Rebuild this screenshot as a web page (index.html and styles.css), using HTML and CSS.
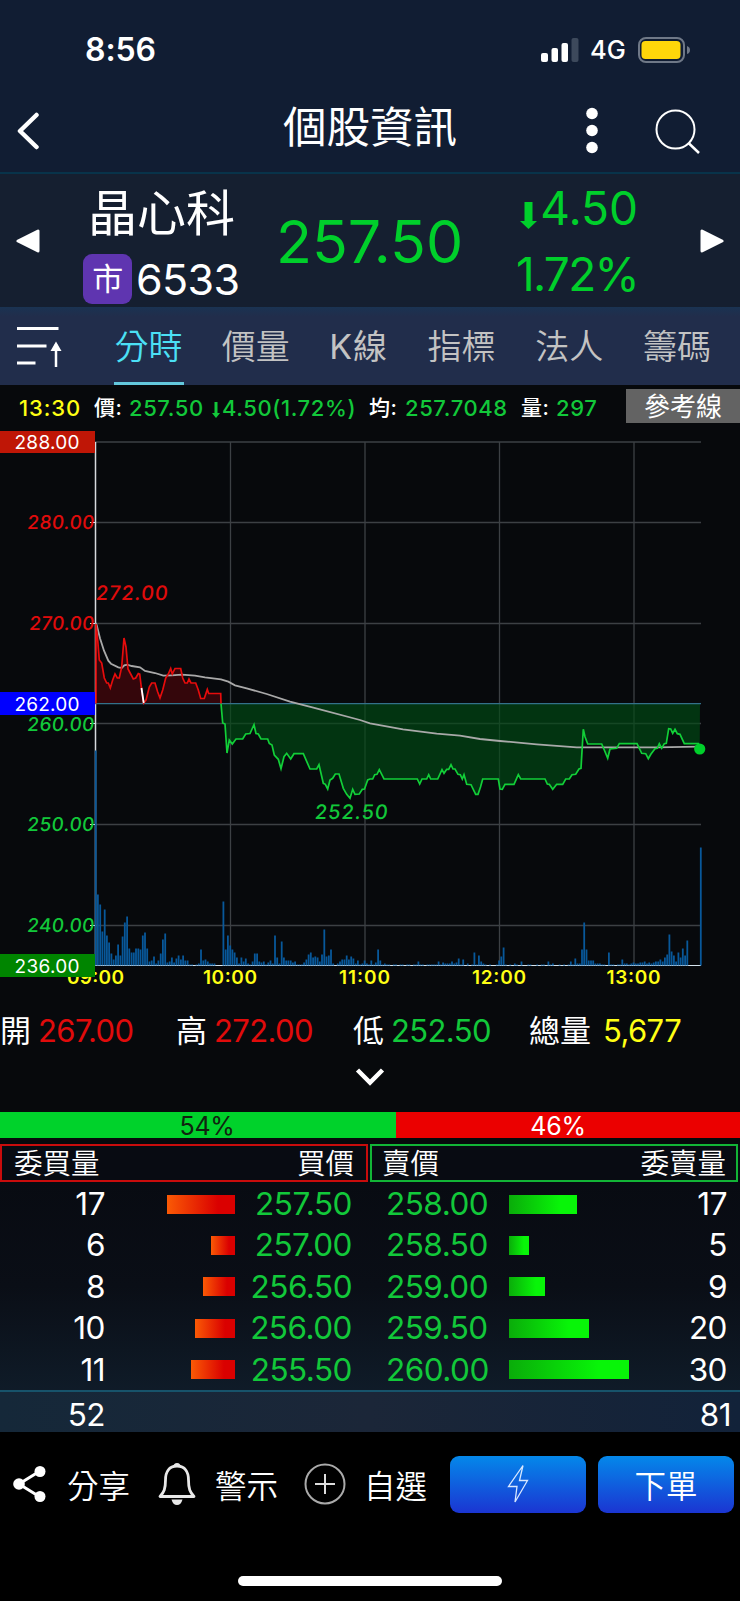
FILE: index.html
```html
<!DOCTYPE html>
<html lang="zh-Hant">
<head>
    <meta charset="UTF-8">
    <meta name="viewport" content="width=device-width, initial-scale=1.0">
    <title>個股資訊</title>
    <link rel="stylesheet" href="styles.css">
</head>
<body>

    <div class="status-bar">
        <span class="clock">8:56</span>
        <svg class="signal" width="38" height="24" viewBox="0 0 38 24">
            <rect x="0" y="15" width="7" height="9" rx="2" fill="#fff"/>
            <rect x="10.500" y="10" width="6.500" height="14" rx="2" fill="#fff"/>
            <rect x="20.500" y="5" width="6.500" height="19" rx="2" fill="#fff"/>
            <rect x="30.500" y="0" width="7" height="24" rx="2" fill="#3d495c"/>
        </svg>
        <span class="network">4G</span>
        <svg class="battery" width="53" height="26" viewBox="0 0 53 26">
            <rect x="1" y="1" width="45" height="24" rx="7" fill="none" stroke="#6f7887" stroke-width="2"/>
            <rect x="3.500" y="4" width="39" height="18" rx="4" fill="#ffd60a"/>
            <path d="M49 9 Q52 10 52 13 Q52 16 49 17 Z" fill="#6f7887"/>
        </svg>
    </div>

    <div class="nav-bar">
        <svg class="back" width="24" height="38" viewBox="0 0 24 38">
            <path d="M20.500 3 L4 19 L20.500 35" fill="none" stroke="#fff" stroke-width="4.500" stroke-linecap="round" stroke-linejoin="round"/>
        </svg>
        <h1>個股資訊</h1>
        <svg class="more" width="12" height="48" viewBox="0 0 12 48">
            <circle cx="6" cy="6.500" r="5.800" fill="#fff"/>
            <circle cx="6" cy="23.500" r="5.800" fill="#fff"/>
            <circle cx="6" cy="40.500" r="5.800" fill="#fff"/>
        </svg>
        <svg class="search" width="46" height="46" viewBox="0 0 46 46">
            <circle cx="20.500" cy="20.500" r="19" fill="none" stroke="#fff" stroke-width="2"/>
            <path d="M33.500 34 L44 44" stroke="#fff" stroke-width="2.500"/>
        </svg>
    </div>

    <div class="stock">
        <svg class="prev" width="24" height="24" viewBox="0 0 24 24"><path d="M2 12 L22 2 V22 Z" fill="#fff" stroke="#fff" stroke-width="3" stroke-linejoin="round"/></svg>
        <div class="stock-name">
            <div class="name">晶心科</div>
            <div class="code"><span class="badge">市</span><span>6533</span></div>
        </div>
        <div class="stock-price">257.50</div>
        <div class="stock-change">
            <div><svg class="down" width="17" height="27" viewBox="0 0 17 27"><path d="M4.500 0 H12.500 V19 H17 L8.500 27 L0 19 H4.500 Z" fill="#00cf2b"/></svg>4.50</div>
            <div class="percent">1.72%</div>
        </div>
        <svg class="next" width="24" height="24" viewBox="0 0 24 24"><path d="M22 12 L2 2 V22 Z" fill="#fff" stroke="#fff" stroke-width="3" stroke-linejoin="round"/></svg>
    </div>

    <div class="tabs">
        <svg class="menu" width="48" height="44" viewBox="0 0 48 44">
            <path d="M0 4.500 H41.500 M0 22 H29.500 M0 39 H18.500" stroke="#fff" stroke-width="3"/>
            <path d="M39 43 V20" stroke="#fff" stroke-width="2.500"/>
            <path d="M39 17.500 L44.500 27 H33.500 Z" fill="#fff"/>
        </svg>
        <div class="tab active">分時</div>
        <div class="tab">價量</div>
        <div class="tab tab-k">K線</div>
        <div class="tab">指標</div>
        <div class="tab">法人</div>
        <div class="tab">籌碼</div>
    </div>

    <div class="quote-line">
        <span class="yellow q-time">13:30</span>
        <span class="q-label q-price">價:</span>
        <span class="green q-last">257.50</span>
        <span class="green q-diff"><svg width="8" height="16" viewBox="0 0 8 16"><path d="M2.500 0 H5.500 V11 H8 L4 16 L0 11 H2.500 Z" fill="#12c83a"/></svg>4.50(1.72%)</span>
        <span class="q-label q-avg">均:</span>
        <span class="green q-mean">257.7048</span>
        <span class="q-label q-vol">量:</span>
        <span class="green q-lots">297</span>
        <div class="ref-btn">參考線</div>
    </div>

    <svg class="chart" width="740" height="570" viewBox="0 430 740 570">
        <g class="grid">
            <path d="M95 442H701 M95 522.500H701 M95 623.500H701 M95 723.500H701 M95 824.500H701 M95 925.500H701"/>
            <path d="M230.500 442V965 M365 442V965 M499.500 442V965 M634 442V965"/>
        </g>
        <path d="M95.500 442V966" stroke="#d6dade" stroke-width="1.500"/>
        <path d="M90 522.500H95 M90 623.500H95 M90 723.500H95 M90 824.500H95 M90 925.500H95" stroke="#e8e8e8" stroke-width="1.200"/>
        <path id="upArea" class="up-area"/>
        <path id="downArea" class="down-area"/>
        <path d="M95 703.600H701" stroke="#33718a" stroke-width="1.200"/>
        <path d="M95 965.500H701" stroke="#d6e4ee" stroke-width="1.200"/>
        <g id="volume" fill="#08589a"></g>
        <path id="avgLine" class="avg-line"/>
        <path id="upLine" class="up-line"/>
        <path id="downLine" class="down-line"/>
        <path d="M141.500 688 L143.700 703" stroke="#fff" stroke-width="1.800"/>
        <circle cx="699.700" cy="749" r="5.600" fill="#00cf2b"/>

        <g class="y-label">
            <text x="27.500" y="529" textLength="67" class="t-red">280.00</text>
            <text x="29.500" y="630" textLength="65" class="t-red">270.00</text>
            <text x="27.500" y="731" textLength="67" class="t-green">260.00</text>
            <text x="27.500" y="831.500" textLength="67" class="t-green">250.00</text>
            <text x="27.500" y="932" textLength="67" class="t-green">240.00</text>
            <text x="96" y="600.500" textLength="72" class="t-red peak">272.00</text>
            <text x="315" y="819" textLength="73" class="t-green peak">252.50</text>
        </g>
        <g class="x-label">
            <text x="95.500" y="984" textLength="57">09:00</text>
            <text x="230" y="984" textLength="54">10:00</text>
            <text x="364.500" y="984" textLength="51">11:00</text>
            <text x="499" y="984" textLength="54">12:00</text>
            <text x="633.500" y="984" textLength="54">13:00</text>
        </g>
        <rect x="0" y="431" width="95" height="22" fill="#bf1606"/>
        <rect x="0" y="692" width="95" height="23" fill="#0000ff"/>
        <rect x="0" y="954" width="95" height="23" fill="#008500"/>
        <g class="limit">
            <text x="47" y="448.800" textLength="65">288.00</text>
            <text x="47" y="710.800" textLength="65">262.00</text>
            <text x="47" y="972.500" textLength="65">236.00</text>
        </g>
    </svg>

    <div class="summary">
        <div><span>開</span><b class="red">267.00</b></div>
        <div><span>高</span><b class="red">272.00</b></div>
        <div><span>低</span><b class="green">252.50</b></div>
        <div><span>總量</span><b class="yellow">5,677</b></div>
    </div>
    <div class="expand">
        <svg width="30" height="20" viewBox="0 0 30 20"><path d="M2.500 3 L15 15.500 L27.500 3" fill="none" stroke="#fff" stroke-width="4.500"/></svg>
    </div>

    <div class="ratio">
        <div class="ratio-buy">54%</div>
        <div class="ratio-sell">46%</div>
    </div>

    <div class="book-head">
        <div class="head-buy"><span>委買量</span><span>買價</span></div>
        <div class="head-sell"><span>賣價</span><span>委賣量</span></div>
    </div>
    <div class="book" id="book"></div>
    <div class="total"><span class="total-buy">52</span><span>81</span></div>

    <div class="bottom-bar">
        <svg class="share" width="34" height="38" viewBox="0 0 34 38">
            <path d="M27 6 L6 19 L27 32" fill="none" stroke="#fff" stroke-width="3"/>
            <circle cx="27" cy="6.500" r="5.500" fill="#fff"/><circle cx="6" cy="19" r="5.800" fill="#fff"/><circle cx="27" cy="31.500" r="5.500" fill="#fff"/>
        </svg>
        <span class="share-text">分享</span>
        <svg class="bell" width="38" height="44" viewBox="0 0 38 44">
            <path d="M15.500 5 Q15.500 1 19 1 Q22.500 1 22.500 5 Z" fill="#e8e8e8"/>
            <path d="M19 4 C11 4 7.500 10 7.500 18 C7.500 27 6 30 2 34.500 H36 C32 30 30.500 27 30.500 18 C30.500 10 27 4 19 4 Z" fill="none" stroke="#e8e8e8" stroke-width="2.800" stroke-linejoin="round"/>
            <path d="M13.500 37.500 H24.500 Q23 43 19 43 Q15 43 13.500 37.500 Z" fill="#e8e8e8"/>
        </svg>
        <span class="alert-text">警示</span>
        <svg class="plus" width="42" height="42" viewBox="0 0 42 42">
            <circle cx="21" cy="21" r="19.500" fill="none" stroke="#aaa" stroke-width="2"/>
            <path d="M21 11 V31 M11 21 H31" stroke="#ddd" stroke-width="2"/>
        </svg>
        <span class="add-text">自選</span>
        <div class="btn flash">
            <svg width="22" height="40" viewBox="0 0 22 40"><path d="M16 1.500 L1.500 22.500 H10 L8 38 L20.500 16.500 H12.500 Z" fill="none" stroke="#d8e8ff" stroke-width="1.300"/></svg>
        </div>
        <div class="btn order">下單</div>
    </div>
    <div class="home-indicator"></div>

    <script src="script.js"></script>
</body>
</html>
```
FILE: styles.css
```css
* {
    box-sizing: border-box;
}

body {
    margin: 0;
    width: 740px;
    height: 1601px;
    overflow: hidden;
    background-color: #000;
    color: #fff;
    font-family: Inter, "Noto Sans CJK TC", sans-serif;
    display: flex;
    flex-direction: column;
}

svg {
    display: block;
    flex: none;
}

body > * {
    flex: none;
}

span, b {
    white-space: nowrap;
    font-weight: inherit;
}

.red { color: #e00b0b; }
.green { color: #12c83a; }
.yellow { color: #ffff14; }

/* status bar */
.status-bar {
    height: 88px;
    padding-top: 11px;
    display: flex;
    align-items: center;
    background-color: #111d33;
}

.clock {
    width: 455px;
    padding-left: 85px;
    font-size: 32px;
    font-weight: 600;
    letter-spacing: -0.1px;
}

.signal { margin-left: 86px; }

.network {
    width: 48px;
    padding-left: 11px;
    font-size: 25.5px;
    font-weight: 500;
}

.battery { margin-left: 11px; }

/* nav bar */
.nav-bar {
    height: 86px;
    display: flex;
    background-color: #111d33;
    border-bottom: 2px solid #08334a;
}

.back { margin: 24px 0 0 16px; }

h1 {
    margin: 9px 0 0 243px;
    width: 303px;
    font-size: 43.5px;
    line-height: 60px;
    font-weight: 400;
}

.more { margin-top: 19px; }
.search { margin: 21px 0 0 57px; }

/* stock header */
.stock {
    height: 133px;
    display: flex;
    align-items: flex-start;
    background-color: #151f30;
}

.prev { margin: 55px 0 0 16px; }

.stock-name {
    width: 236px;
    padding-left: 43px;
}

.name {
    height: 80px;
    padding-left: 5px;
    font-size: 49px;
    line-height: 79px;
    font-weight: 400;
}

.code {
    display: flex;
    align-items: center;
    height: 50px;
    font-size: 43px;
    letter-spacing: -0.6px;
}

.badge {
    width: 49px;
    height: 50px;
    margin-right: 4px;
    border-radius: 9px;
    background-color: #5f35b0;
    font-size: 31px;
    line-height: 49px;
    text-align: center;
}

.stock-price {
    width: 192px;
    font-size: 59px;
    line-height: 136px;
    color: #00cf2b;
}

.stock-change {
    width: 170px;
    padding-top: 1px;
    color: #00cf2b;
    font-size: 46px;
    line-height: 66px;
    text-align: right;
}

.down {
    display: inline-block;
    margin-right: 3px;
    vertical-align: -4px;
}

.percent { letter-spacing: -1.7px; }
.next { margin: 55px 0 0 62px; }

/* tabs */
.tabs {
    height: 78px;
    display: flex;
    background: linear-gradient(#1a3352, #212d4b 12%, #212d4b);
}

.menu { margin: 17px 28px 0 17px; }

.tab {
    width: 107.7px;
    font-size: 34px;
    font-weight: 350;
    line-height: 80px;
    text-align: center;
    color: #c3c3c3;
}

.tab-k {
    width: 98px;
    letter-spacing: 1px;
    font-weight: 400;
}

.active {
    width: 70px;
    margin: 0 18.5px 0 20.5px;
    border-bottom: 3px solid #63c8dc;
    color: #4be0f5;
}

/* quote line */
.quote-line {
    height: 45px;
    display: flex;
    font-size: 22px;
    line-height: 46px;
    font-weight: 500;
    letter-spacing: 0.6px;
    background-color: #07090c;
}

.q-time { width: 94px; padding-left: 19px; letter-spacing: 0.9px; }
.q-price { width: 35px; }
.q-last { width: 83px; }
.q-diff { width: 157px; display: flex; }
.q-diff svg { margin: 17px 2px 0 0; }
.q-avg { width: 36px; }
.q-mean { width: 116px; }
.q-vol { width: 35px; }
.q-lots { width: 70px; }

.q-label {
    font-size: 21px;
}

.ref-btn {
    width: 114px;
    height: 34px;
    margin-top: 4px;
    background-color: #636363;
    font-size: 26px;
    line-height: 35px;
    font-weight: 400;
    letter-spacing: 0;
    text-align: center;
}

/* chart */
.chart {
    background-color: #07090c;
    font-size: 19px;
}

.grid path {
    stroke: #3c4044;
    stroke-width: 1.3;
}

.up-area { fill: #34060b; }
.down-area { fill: rgba(0, 75, 20, 0.65); }
.avg-line { fill: none; stroke: #a9a9a9; stroke-width: 1.8; }
.up-line { fill: none; stroke: #e60c0c; stroke-width: 1.7; }
.down-line { fill: none; stroke: #12cf38; stroke-width: 1.7; }

.y-label text {
    font-weight: 500;
    transform-box: fill-box;
    transform-origin: center;
    transform: skewX(-6deg);
}

.y-label .peak { font-size: 20px; }
.t-red { fill: #e00b0b; }
.t-green { fill: #12c83a; }

.x-label text {
    fill: #ffff14;
    font-weight: 600;
    text-anchor: middle;
}

.limit text {
    fill: #fff;
    text-anchor: middle;
}

/* summary */
.summary {
    height: 62px;
    display: grid;
    grid-template-columns: 176px 177px 176px 211px;
    font-size: 31px;
    font-weight: 400;
    line-height: 62px;
    background-color: #07090c;
}

.summary b {
    margin-left: 7px;
    font-size: 31px;
    letter-spacing: -0.6px;
}

.summary .yellow { margin-left: 12px; }

.expand {
    height: 50px;
    padding-top: 5px;
    display: flex;
    justify-content: center;
    background-color: #07090c;
}

/* buy / sell ratio */
.ratio {
    height: 32px;
    padding-bottom: 6px;
    display: flex;
    font-size: 25px;
    line-height: 29px;
    text-align: center;
    letter-spacing: -0.3px;
    background-color: #07090c;
}

.ratio-buy {
    width: 396px;
    padding-left: 18px;
    background-color: #00d22b;
    color: #10240f;
}

.ratio-sell {
    flex: 1;
    padding-right: 20px;
    background-color: #eb0000;
}

.book-head {
    height: 38px;
    display: flex;
    gap: 2px;
    background-color: #080b12;
    font-size: 28.5px;
    font-weight: 350;
    line-height: 36px;
}

.book-head div {
    width: 368px;
    display: flex;
    justify-content: space-between;
    border: 2px solid #c90c0c;
    padding: 0 12px;
}

.book-head .head-sell {
    border-color: #12b436;
    padding: 0 10px;
}

/* order book */
.book {
    height: 208px;
    padding-top: 1px;
    background: linear-gradient(#080b12, #0a0e16 50%, #0f1b28);
}

.row {
    height: 41.4px;
    display: grid;
    grid-template-columns: 105px 130px 117px 34px 123px 151px 67px;
    align-items: center;
    font-size: 31.5px;
    line-height: 42px;
    letter-spacing: -0.5px;
    text-align: right;
}

.row .ask { grid-column: 5; text-align: left; }

.bid-bar, .ask-bar {
    height: 19px;
    background: linear-gradient(90deg, #fa5a05, #da0000 75%);
    justify-self: end;
}

.ask-bar {
    background: linear-gradient(90deg, #0aac0a, #08f508 75%);
    justify-self: start;
}

.total {
    height: 42px;
    padding-right: 9px;
    display: flex;
    justify-content: space-between;
    border-top: 2px solid #17536b;
    background: linear-gradient(90deg, #152839, #1b2638 50%, #122239);
    font-size: 31.5px;
    line-height: 45px;
    letter-spacing: -0.5px;
}

.total-buy {
    width: 105px;
    text-align: right;
}

/* bottom bar */
.bottom-bar {
    height: 104px;
    display: flex;
    align-items: center;
    font-size: 31.5px;
    font-weight: 350;
}

.share { margin-left: 13px; }
.share-text { width: 90px; margin-left: 20px; }
.bell { margin-left: 1px; }
.alert-text { width: 88px; margin-left: 19px; }
.plus { margin-left: 1px; }
.add-text { width: 86px; margin-left: 18px; }

.btn {
    width: 136px;
    height: 57px;
    border-radius: 9px;
    display: flex;
    justify-content: center;
    align-items: center;
    background: linear-gradient(#0488ea, #1b35d2);
}

.order { margin-left: 12px; }

.home-indicator {
    width: 264px;
    height: 10px;
    margin: 40px auto 0;
    border-radius: 5px;
    background-color: #fff;
}
```
FILE: script.js
```js
// Linhas de preço: coordenadas x,y do gráfico
var up = '96,624 97.7,640 99.3,660 101.7,663 104.3,678 106.7,683 108.3,683 110.3,688 112.7,680 115,674 117.3,678 119.3,678 121.7,667 124,638 126,647 128,669 130.7,674 133.3,679 135.7,678 138.3,673.5 139.7,674 141.3,687 143.7,703 146,700 149.3,687 151.7,683 155,683 157.7,692 160,698 162.7,690 165.7,678 168.3,674 170.7,668.500 172.3,674 175,668.500 180.7,668.500 182.7,678 185,683 187.3,683 189,679 191,683 195.7,683 198.3,690 200.7,698.500 204.3,698.500 207.3,689.500 208.7,693.500 220.7,693.500 221,703.600';
var down = '221,703.600 222.7,723 225,724 227,753 229.3,740 232.3,744 236,739 242.7,739 245.7,734 250,733.5 254,724.7 256,733.5 258.3,734 261,739 267.7,739 269.3,743.5 272,745 274.3,755 278.3,759.3 281,768.7 284,756.7 286.7,753.3 290.7,759 294,753.7 303.3,753.7 310,769 316.7,769 319,764.7 323.3,783.3 325.3,784.3 327.7,789 330,780 332.7,778.3 335.3,774 339,774 343.3,788.3 346.7,794.3 350,798.3 352.7,789.3 355,794.3 359.3,794 362.3,789.3 364.5,789 367.7,780 370,779 372.7,779 374.7,774.7 377,774.3 379.3,769.7 384,779 417.3,779 419.7,784 422,779 426.7,779 428.7,774.7 430.7,779 437.7,779 442,769.7 444,773.3 446.7,769.3 448.7,769.3 451,764.7 453,769 455,769 458,774.3 460.3,774.7 462.3,779 464,774.7 466.7,784.3 471,784.7 475.7,794.3 478,794.3 480.5,787 482.7,779 498.3,779 500,789 502.3,789.3 505,784.3 514,784.3 518.3,774.7 520.7,779 545,779 547.3,784 549.3,784.3 552.7,789.3 556.7,784.3 562.7,784.3 565.7,779 569.3,779 572,774.7 575.7,774.3 579,769 581,768.3 583.3,729.3 585,736.7 587.7,744 601.7,744 604.3,750 607.7,758.3 610,749 616.7,748.3 619.3,743.7 637,743.7 641.7,753.3 645.7,753.7 648.3,758.7 651,754 655,748.7 657.3,748.3 659.3,743.7 661.7,748.3 664.3,743.7 666.3,743.3 668.7,728.7 670.7,729 672.7,733.3 675,729.3 677.3,733.7 680,734.3 684.3,743.7 698.3,743.7 699.7,749';
var avg = '95.5,623 96.7,625 100,638.3 104,650.7 108.3,660.7 111,663.7 118.3,667.3 121.7,668 124.3,665.3 127.3,664.7 131.7,666 140,667.3 145,671 155,673 163.3,675.7 171.7,675.3 181.7,674.7 195,675.7 205,677.3 221,679.3 228.3,681.7 235,685.3 246.7,688.3 266.7,694 290,701.7 313.3,707.7 360,720 370,723.3 403,729.3 436.7,733.7 460,735.7 480,739 500,741 536.7,744.3 576.7,747.3 656.7,747.3 698.3,746.7';

document.getElementById('upLine').setAttribute('d', 'M96,703.6 L' + up);
document.getElementById('upArea').setAttribute('d', 'M96,703.6 L' + up + ' Z');
document.getElementById('downLine').setAttribute('d', 'M' + down);
document.getElementById('downArea').setAttribute('d', 'M' + down + ' L700,703.6 Z');
document.getElementById('avgLine').setAttribute('d', 'M' + avg);

// Volume por minuto, a partir das 09:00
var volume = [
    215,71,61,34,56,30,23,12,6,10,21,10,29,43,49,17,13,13,17,17,16,30,33,17,4,5,9,2,5,12,
    26,32,3,4,8,3,7,10,6,10,5,5,1,1,0,1,2,16,5,6,4,2,2,2,0,0,0,64,16,30,
    20,16,13,8,2,8,4,7,2,1,4,12,12,4,3,4,1,3,5,2,30,8,2,24,8,5,5,5,3,4,
    1,1,1,3,6,11,13,8,9,8,4,11,36,9,10,16,2,0,2,4,6,6,10,6,9,7,2,5,1,2,
    5,2,1,5,1,3,16,5,1,2,1,1,0,1,1,0,1,1,0,1,1,0,1,1,4,1,1,0,1,1,
    1,1,1,4,1,3,2,2,2,4,2,3,7,1,6,0,2,0,1,13,1,10,4,2,1,0,1,0,0,1,
    5,9,18,1,0,1,0,2,1,0,4,0,0,1,1,0,0,1,0,1,1,0,4,1,2,0,0,1,0,1,
    0,1,4,1,7,2,2,16,43,16,5,5,5,2,2,2,1,1,0,13,1,1,0,1,1,6,2,2,1,2,
    3,2,2,3,3,4,2,3,2,3,4,4,6,4,8,11,31,14,10,4,13,8,17,10,25,0,0,0,0,0,118
];
var bars = '';
volume.forEach(function(v, i) {
    if (v) {
        bars += '<rect x="' + (94.8 + i * 2.241).toFixed(1) + '" y="' + (965.5 - v) + '" width="1.8" height="' + v + '"/>';
    }
});
document.getElementById('volume').innerHTML = bars;

// Cinco melhores ofertas: quantidade e preço de compra / venda
var book = [
    [17, '257.50', '258.00', 17],
    [6, '257.00', '258.50', 5],
    [8, '256.50', '259.00', 9],
    [10, '256.00', '259.50', 20],
    [11, '255.50', '260.00', 30]
];
document.getElementById('book').innerHTML = book.map(function(r) {
    return '<div class="row">' +
        '<span>' + r[0] + '</span>' +
        '<div class="bid-bar" style="width:' + r[0] * 4 + 'px"></div>' +
        '<span class="green">' + r[1] + '</span>' +
        '<span class="green ask">' + r[2] + '</span>' +
        '<div class="ask-bar" style="width:' + r[3] * 4 + 'px"></div>' +
        '<span>' + r[3] + '</span>' +
        '</div>';
}).join('');
```
